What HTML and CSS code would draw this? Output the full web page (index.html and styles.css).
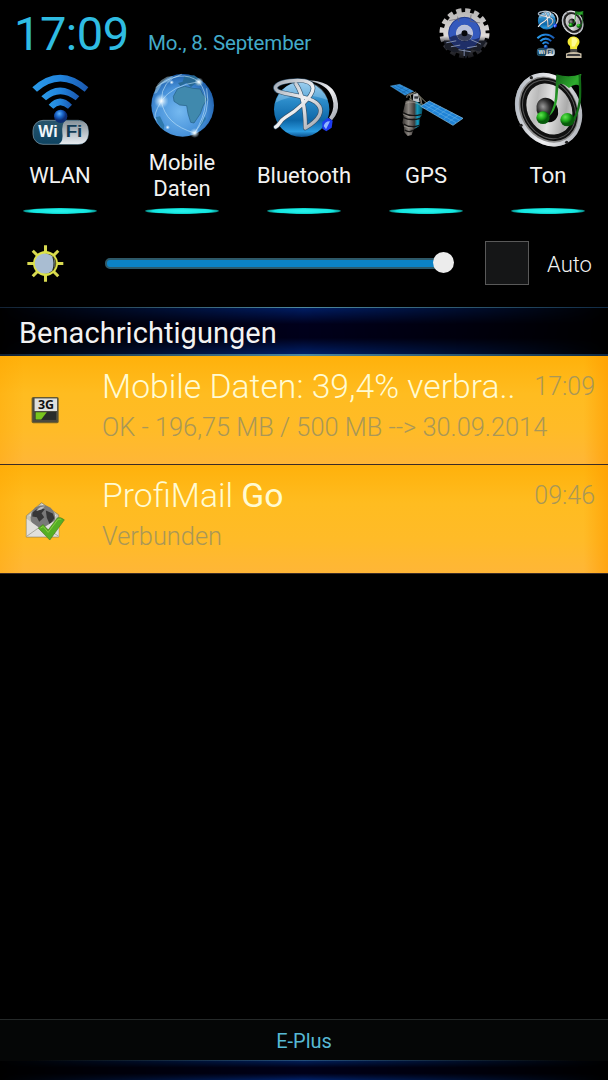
FILE: index.html
```html
<!DOCTYPE html>
<html lang="de">
<head>
    <meta charset="UTF-8">
    <meta name="viewport" content="width=device-width, initial-scale=1.0">
    <title>Benachrichtigungen</title>
    <link rel="stylesheet" href="styles.css">
</head>
<body>
    <!-- shared icons -->
    <svg class="defs" width="0" height="0">
        <defs>
            <linearGradient id="wave" x1="0" x2="1"><stop offset="0" stop-color="#2b9be8"/><stop offset=".5" stop-color="#2184dd"/><stop offset="1" stop-color="#1b57ae"/></linearGradient>
            <radialGradient id="dot" cx=".4" cy=".3"><stop offset="0" stop-color="#5fb2fa"/><stop offset=".5" stop-color="#1c68cd"/><stop offset="1" stop-color="#0b2c74"/></radialGradient>
            <linearGradient id="pill" x1="0" x2="0" y1="0" y2="1"><stop offset="0" stop-color="#28546b"/><stop offset="1" stop-color="#0e4361"/></linearGradient>
            <linearGradient id="silver" x1="0" x2="0" y1="0" y2="1"><stop offset="0" stop-color="#87939b"/><stop offset="1" stop-color="#e6ebf0"/></linearGradient>
            <radialGradient id="globe" cx=".45" cy=".6" r=".6"><stop offset="0" stop-color="#75b9f0"/><stop offset=".65" stop-color="#4791d9"/><stop offset="1" stop-color="#1d5da9"/></radialGradient>
            <radialGradient id="flare"><stop offset="0" stop-color="#fff"/><stop offset=".3" stop-color="#e6f6ff" stop-opacity=".75"/><stop offset="1" stop-color="#c0e4ff" stop-opacity="0"/></radialGradient>
            <linearGradient id="ball" x1="0" x2="0" y1="0" y2="1"><stop offset="0" stop-color="#8fc7ec"/><stop offset=".35" stop-color="#2b8bc9"/><stop offset=".7" stop-color="#0c67a8"/><stop offset=".9" stop-color="#2b9be0"/><stop offset="1" stop-color="#0a4b87"/></linearGradient>
            <linearGradient id="chrome" x1="0" x2="1" y1="0" y2="1"><stop offset="0" stop-color="#a3abb6"/><stop offset=".5" stop-color="#f0f0f2"/><stop offset="1" stop-color="#9da2ab"/></linearGradient>
            <linearGradient id="cone" x1="0" x2="1" y1="0" y2="1"><stop offset="0" stop-color="#efefef"/><stop offset=".3" stop-color="#b9b9b9"/><stop offset=".5" stop-color="#e3e3e3"/><stop offset=".75" stop-color="#aaa"/><stop offset="1" stop-color="#fafafa"/></linearGradient>
            <radialGradient id="cap" cx=".4" cy=".3"><stop offset="0" stop-color="#999"/><stop offset=".6" stop-color="#303030"/><stop offset="1" stop-color="#080808"/></radialGradient>
            <radialGradient id="note" cx=".35" cy=".3"><stop offset="0" stop-color="#63e552"/><stop offset=".6" stop-color="#1fab1b"/><stop offset="1" stop-color="#075b0b"/></radialGradient>
            <linearGradient id="beam" x1="0" x2="1" y1="0" y2="1"><stop offset="0" stop-color="#0a4b11"/><stop offset=".5" stop-color="#2eac2e"/><stop offset="1" stop-color="#08420c"/></linearGradient>
            <linearGradient id="body" x1="0" x2="1"><stop offset="0" stop-color="#36322f"/><stop offset=".3" stop-color="#8c8782"/><stop offset=".58" stop-color="#413d3b"/><stop offset=".72" stop-color="#119bc0"/><stop offset="1" stop-color="#064557"/></linearGradient>
            <linearGradient id="gear" gradientUnits="userSpaceOnUse" x1="0" x2="0" y1="24" y2="176"><stop offset="0" stop-color="#b5b3b3"/><stop offset=".55" stop-color="#e0dcda"/><stop offset=".68" stop-color="#4a4b52"/><stop offset="1" stop-color="#151519"/></linearGradient>
        </defs>

        <symbol id="i-wifi" viewBox="96 24 174 214">
            <path d="M97 64Q180-11 265 64L254 77Q180 16 111 77Z" fill="url(#wave)"/>
            <path d="M124 91Q180 38 238 91L227 103Q180 66 138 103Z" fill="url(#wave)"/>
            <path d="M146 116Q180 79 216 116L204 128Q180 107 160 128Z" fill="url(#wave)"/>
            <rect x="99" y="163" width="166" height="72" rx="30" fill="url(#pill)" stroke="#8ba6b5" stroke-width="2"/>
            <path d="M195 165H236Q265 163 265 198Q265 234 236 234H177Q191 224 187 200Q185 174 195 165Z" fill="url(#silver)"/>
            <circle cx="182" cy="151" r="20" fill="url(#dot)"/>
        </symbol>

        <symbol id="i-bluetooth" viewBox="84 34 202 184">
            <circle cx="170" cy="130" r="83" fill="url(#ball)"/>
            <path d="M91 110Q116 44 181 47Q235 53 249 103Q175 71 91 110Z" fill="#c4e6f8" opacity=".3"/>
            <path d="M188 43C244 45 274 65 279 113Q282 139 261 163L252 156Q267 134 265 111C260 75 240 55 188 43Z" fill="url(#chrome)"/>
            <path d="M92 183C103 178 104 164 121 154C151 137 207 91 204 65C201 44 172 41 134 45C96 50 82 64 98 75C119 86 178 87 212 109C244 134 218 165 181 186C181 144 178 91 153 54" fill="none" stroke="#35556f" stroke-width="14" stroke-linejoin="round" stroke-linecap="round"/>
            <path d="M92 183C103 178 104 164 121 154C151 137 207 91 204 65C201 44 172 41 134 45C96 50 82 64 98 75C119 86 178 87 212 109C244 134 218 165 181 186C181 144 178 91 153 54" fill="none" stroke="url(#chrome)" stroke-width="10" stroke-linejoin="round" stroke-linecap="round"/>
            <path d="M232 168L249 155L263 164L260 185L244 196L232 188Z" fill="#1d3bf1"/>
            <path d="M236 180Q240 165 255 166Q248 180 243 190Z" fill="#91b6ff"/>
        </symbol>

        <symbol id="i-sound" viewBox="74 16 208 230">
            <ellipse cx="177" cy="132" rx="94" ry="114" transform="rotate(-30 177 132)" fill="#8c8c8c"/>
            <ellipse cx="179" cy="131" rx="90" ry="109" transform="rotate(-30 179 131)" fill="none" stroke="url(#chrome)" stroke-width="11"/>
            <ellipse cx="180" cy="130" rx="81" ry="99" transform="rotate(-30 180 130)" fill="#101010"/>
            <ellipse cx="180" cy="130" rx="75" ry="92" transform="rotate(-30 180 130)" fill="none" stroke="#555" stroke-width="3"/>
            <ellipse cx="181" cy="129" rx="65" ry="80" transform="rotate(-30 181 129)" fill="url(#cone)"/>
            <ellipse cx="175" cy="132" rx="31" ry="38" transform="rotate(-30 175 132)" fill="url(#cap)"/>
            <g fill="#222"><circle cx="127" cy="35" r="5"/><circle cx="96" cy="178" r="5"/><circle cx="233" cy="229" r="5"/></g>
            <path d="M202 25Q240 37 277 24L272 61Q260 50 240 66Q219 48 209 55L205 100Q199 137 180 151Q196 121 198 93Z" fill="url(#beam)"/>
            <path d="M272 27C275 84 278 128 246 176" fill="none" stroke="#126c16" stroke-width="7"/>
            <ellipse cx="162" cy="155" rx="20" ry="19" fill="url(#note)"/>
            <ellipse cx="235" cy="161" rx="21" ry="20" fill="url(#note)"/>
        </symbol>
    </svg>

    <header class="status">
        <span class="clock">17:09</span>
        <span class="date">Mo., 8. September</span>
        <svg class="gear" viewBox="24 20 160 160">
            <circle cx="104" cy="99" r="68" fill="none" stroke="url(#gear)" stroke-width="15" stroke-dasharray="15.5 11.2"/>
            <circle cx="104" cy="99" r="64" fill="url(#gear)"/>
            <path d="M42 121H172L149 154L126 148L108 176L96 153L73 157L45 145Z" fill="#1a1d27"/>
            <circle cx="104" cy="99" r="37" fill="none" stroke="#3459bd" stroke-width="23"/>
            <circle cx="104" cy="99" r="48" fill="none" stroke="#1a2c70" stroke-width="2"/>
            <path d="M59 112Q82 99 102 112T149 113Q141 145 104 147Q66 143 59 112Z" fill="#18224c" opacity=".75"/>
            <path d="M49 128L79 122M124 119L154 132M63 140L91 135M112 143L142 138M103 148V168M86 149L123 155" fill="none" stroke="#7f8cab" stroke-width="3"/>
            <circle cx="104" cy="99" r="24" fill="#b8bfda"/>
            <path d="M81 106Q102 93 127 106Q121 123 103 123Q86 120 81 106Z" fill="#39405b"/>
            <circle cx="104" cy="99" r="9" fill="#050609"/>
            <path d="M83 49L87 64M58 61L89 55M124 43L121 63L151 68" stroke="#66616a" stroke-width="2" fill="none"/>
        </svg>
        <svg class="toggles" viewBox="315 20 150 160">
            <use href="#i-bluetooth" x="322" y="29" width="66" height="62"/>
            <use href="#i-sound" x="394" y="29" width="68" height="76"/>
            <use href="#i-wifi" x="319" y="99" width="57" height="70"/>
            <g transform="translate(287.6 91.1) scale(.3276)" class="wifi-text">
                <text x="115" y="214" textLength="58" lengthAdjust="spacingAndGlyphs" fill="#f1f6fa">Wi</text>
                <text x="197" y="214" textLength="50" lengthAdjust="spacingAndGlyphs" fill="#123c56">Fi</text>
            </g>
            <path d="M421 148L420 138Q410 130 414 119Q421 107 433 109Q449 112 449 126Q449 134 442 140L441 150Z" fill="#f5eb34"/>
            <path d="M425 113Q437 109 443 122L434 139H425Z" fill="#fffb93"/>
            <path d="M421 147H442V158H421Z" fill="#4d4c49"/>
            <path d="M408 160Q431 151 455 160V174H408Z" fill="#c9bda5"/>
            <path d="M413 162H449L452 168H410Z" fill="#3a3a3b"/>
        </svg>
    </header>

    <div class="quick">
        <div class="tile">
            <svg viewBox="-3 0 366 252">
                <use href="#i-wifi" x="96" y="24" width="174" height="214"/>
                <g class="wifi-text">
                    <text x="115" y="214" textLength="58" lengthAdjust="spacingAndGlyphs" fill="#f1f6fa">Wi</text>
                    <text x="197" y="214" textLength="50" lengthAdjust="spacingAndGlyphs" fill="#123c56">Fi</text>
                </g>
            </svg>
            <div class="label">WLAN</div>
            <div class="light"></div>
        </div>
        <div class="tile">
            <svg viewBox="-12 0 366 252">
                <circle cx="173" cy="118" r="94" fill="url(#globe)"/>
                <path d="M145 91L158 68L179 61L204 67L226 69L233 84L246 99L234 120L226 143L207 171L197 169L189 143L185 119L164 117L147 106Z" fill="#4089ad" stroke="#245d83" stroke-width="2"/>
                <path d="M159 51L173 47L178 31L207 28L225 40L231 52L219 59L210 53L198 63L184 51L166 60Z" fill="#286a95"/>
                <path d="M88 84Q91 48 126 32L144 30L133 46L111 54L96 80Z" fill="#a8d3eb" opacity=".5"/>
                <path d="M92 154L105 151L118 178L116 193Q99 177 92 154ZM226 171L240 151L243 159L226 184Z" fill="#2e79ad"/>
                <path d="M92 65Q168 5 222 48Q267 104 209 201Q121 176 109 105Q141 58 222 47M109 105Q80 153 94 163M109 105Q109 42 170 25M209 201Q260 139 245 67" fill="none" stroke="#c6e8fb" stroke-width="2.5" opacity=".7"/>
                <circle cx="109" cy="105" r="22" fill="url(#flare)"/>
                <circle cx="209" cy="201" r="15" fill="url(#flare)"/>
                <circle cx="222" cy="48" r="14" fill="url(#flare)"/>
                <circle cx="128" cy="184" r="7" fill="url(#flare)"/>
                <circle cx="140" cy="49" r="7" fill="url(#flare)"/>
            </svg>
            <div class="label">Mobile Daten</div>
            <div class="light"></div>
        </div>
        <div class="tile">
            <svg viewBox="-6 0 366 252"><use href="#i-bluetooth" x="84" y="34" width="202" height="184"/></svg>
            <div class="label">Bluetooth</div>
            <div class="light"></div>
        </div>
        <div class="tile">
            <svg viewBox="-6 0 366 252">
                <path d="M70 60L98 55L140 76L114 88Z" fill="#2c8ddb" stroke="#80bfe7" stroke-width="1"/>
                <path d="M79 62L119 83M87 58L130 80M94 73L111 61M106 80L126 69" stroke="#155994" stroke-width="1.5"/>
                <path d="M125 89L145 78L182 114M126 98L174 128M130 86L133 107M157 89L166 117" stroke="#8d8b75" stroke-width="3" fill="none"/>
                <path d="M139 83L153 82L158 108H137Z" fill="#bbbfc4"/><path d="M142 91H153V98H142Z" fill="#33373b"/>
                <path d="M119 95Q119 83 137 84M156 91Q166 101 161 115" fill="none" stroke="#737069" stroke-width="4"/>
                <path d="M116 105Q139 97 168 119L164 148L158 157L157 180L139 191L134 207L122 210L112 199L111 178L106 171L110 151L107 143Z" fill="url(#body)"/>
                <path d="M108 140Q130 155 164 145M108 154Q130 166 160 157M110 174Q130 188 157 178M113 192Q126 201 138 193" fill="none" stroke="#161514" stroke-width="4"/>
                <path d="M109 145Q127 156 143 153M110 180Q124 187 137 186M116 112Q138 102 162 119" fill="none" stroke="#aaa49d" stroke-width="2"/>
                <path d="M161 121L187 105L288 157L258 178Z" fill="#2083d6" stroke="#8fc8ea" stroke-width="2"/>
                <path d="M171 116L267 170M179 111L278 163M178 129L204 114M196 138L221 122M214 148L239 131M231 158L256 140M246 167L272 149" stroke="#6fb8e8" stroke-width="1.5"/>
            </svg>
            <div class="label">GPS</div>
            <div class="light"></div>
        </div>
        <div class="tile">
            <svg viewBox="-6 0 366 252"><use href="#i-sound" x="74" y="16" width="208" height="230"/></svg>
            <div class="label">Ton</div>
            <div class="light"></div>
        </div>
    </div>

    <div class="brightness">
        <svg class="sun" viewBox="80 56 116 116">
            <path d="M138 60V168M84 114H191M100 76L176 152M176 76L100 152" stroke="#d8d951" stroke-width="9"/>
            <circle cx="138" cy="114" r="37" fill="#dde34a"/>
            <circle cx="141" cy="114" r="29" fill="#5b5925"/>
            <circle cx="136" cy="114" r="30" fill="#a9bdd2"/>
            <path d="M160 95Q167 114 160 133" fill="none" stroke="#182017" stroke-width="3"/>
        </svg>
        <div class="slider"><div class="thumb"></div></div>
        <div class="checkbox"></div>
        <span class="auto">Auto</span>
    </div>

    <h1 class="section">Benachrichtigungen</h1>

    <div class="notification">
        <div class="icon">
            <svg viewBox="70 120 130 90">
                <rect x="96" y="126" width="82" height="79" rx="5" fill="#70612c"/>
                <rect x="99" y="128" width="76" height="73" rx="3" fill="#4b4a3f"/>
                <path d="M105 130H173V168H105Z" fill="#dedfdd"/>
                <path d="M106 171H170V195H106Z" fill="#292c2a"/>
                <path d="M108 172H142L125 194H108Z" fill="#79c51e"/>
                <text x="115" y="163" textLength="49" lengthAdjust="spacingAndGlyphs" class="network-text">3G</text>
            </svg>
        </div>
        <div class="content">
            <div class="row"><h2>Mobile Daten: 39,4% verbra..</h2><span class="time">17:09</span></div>
            <p class="info">OK - 196,75 MB / 500 MB --&gt; 30.09.2014</p>
        </div>
    </div>

    <div class="notification second">
        <div class="icon">
            <svg viewBox="70 430 130 125">
                <path d="M80 477L126 437L178 474V541H80Z" fill="#c5c4b9" stroke="#847a5a" stroke-width="2"/>
                <path d="M89 476L128 441L170 476L130 511Z" fill="#edece6"/>
                <circle cx="130" cy="482" r="37" fill="#797979"/>
                <path d="M99 467Q115 449 136 457L126 469L134 481L119 495L112 481L98 479ZM139 461L160 470L165 484L151 503L142 483Z" fill="#363636"/>
                <path d="M110 462Q120 448 136 449L126 458Z" fill="#bdbdbd"/>
                <path d="M81 486L119 513L135 511L178 484V539H81Z" fill="#e1e0dc"/>
                <path d="M82 538L119 512M138 513L177 538" stroke="#aaa99f" stroke-width="3"/>
                <path d="M116 514L131 503L146 520L174 483Q184 480 195 489L151 550Z" fill="#54af24" stroke="#4e7920" stroke-width="2"/>
                <path d="M123 514L131 509L146 527L176 487H186" fill="none" stroke="#8acd42" stroke-width="3"/>
            </svg>
        </div>
        <div class="content">
            <div class="row"><h2>ProfiMail <b>Go</b></h2><span class="time">09:46</span></div>
            <p class="info">Verbunden</p>
        </div>
    </div>

    <footer>
        <div class="carrier">E-Plus</div>
        <div class="handle"></div>
    </footer>
</body>
</html>
```
FILE: styles.css
```css
* { box-sizing: border-box; }
body { margin: 0; height: 1080px; display: flex; flex-direction: column; overflow: hidden; background-color: #000; color: #f2f2f2; font-family: Roboto, sans-serif; }
svg { display: block; flex: none; }
h1, h2, p { margin: 0; font-weight: 300; }
.defs { position: absolute; }

.status { height: 66px; display: flex; align-items: flex-start; padding-left: 14px; color: #2fbce2; white-space: nowrap; }
.clock { width: 134px; font-size: 47px; line-height: 68px; letter-spacing: -0.5px; }
.date { width: 290px; font-size: 20.5px; line-height: 87px; letter-spacing: -0.15px; color: #43abc9; }
.gear { width: 53px; height: 53px; margin-top: 7px; }
.toggles { width: 50px; height: 53px; margin: 7px 0 0 44px; }

.quick { display: grid; grid-template-columns: repeat(5, 122px); margin-left: -1px; height: 160px; }
.tile { display: flex; flex-direction: column; align-items: center; }
.tile svg { width: 122px; height: 84px; }
.label { height: 52px; width: 104px; display: flex; align-items: center; justify-content: center; text-align: center; font-size: 22px; line-height: 26px; }
.light { width: 74px; height: 6px; margin-top: 6px; border-radius: 50%; background: radial-gradient(closest-side, #2bf5ee 0%, #12e6e0 80%, #08837f 100%); }
.wifi-text { font: bold 50px "Liberation Sans", sans-serif; }

.brightness { height: 81px; display: flex; align-items: center; padding: 0 15px 6px 26px; }
.sun { width: 39px; height: 39px; }
.slider { position: relative; width: 340px; height: 11px; margin-left: 40px; border: 2px solid #2d5969; border-radius: 5px; background-color: #0b82c5; }
.thumb { position: absolute; right: -11px; top: -8px; width: 21px; height: 21px; border-radius: 50%; background-color: #ececec; }
.checkbox { width: 44px; height: 44px; margin: -2px 0 0 40px; border: 1px solid #595959; background-color: #151617; }
.auto { margin: 2px 0 0 18px; font-size: 22px; font-weight: 300; }

.section { height: 49px; padding-left: 19px; font-size: 29px; line-height: 50px; font-weight: 400; letter-spacing: 0.05px; border-top: 1px solid; border-bottom: 2px solid; border-image: linear-gradient(90deg, #122235, #4d899f 50%, #102a44) 1;
    background: linear-gradient(90deg, #000 0%, transparent 50%, #000 100%), linear-gradient(#001d64, #00001c 35%, #00001a 65%, #002069); }

.notification { height: 109px; display: flex; padding: 0 13px 0 23px; border-bottom: 1px solid #3b2b25; background: linear-gradient(90deg, rgba(255,165,0,.35), transparent 4%, transparent 96%, rgba(255,156,0,.65)), linear-gradient(#ffb10b, #ffbc20 35%, #ffbb28 70%, #ffb637); }
.icon { width: 79px; padding-top: 39px; }
.icon svg { width: 43px; height: 30px; }
.second .icon { padding-top: 35px; }
.second .icon svg { height: 42px; }
.content { flex: 1; white-space: nowrap; }
.row { display: flex; justify-content: space-between; padding-top: 9px; }
h2 { font-size: 33.7px; line-height: 44px; color: #fffbd2; }
h2 b { font-weight: 400; }
.time { font-size: 25px; line-height: 43px; font-weight: 300; color: #a99758; }
.info { font-size: 25.4px; line-height: 30px; margin-top: 3px; color: #a99758; }
.network-text { font: bold 36px "Open Sans", sans-serif; fill: #111; }

footer { margin-top: auto; height: 61px; border-top: 1px solid #252929; background-color: #050606; }
.carrier { height: 40px; line-height: 43px; text-align: center; font-size: 20px; color: #57b9d5; }
.handle { height: 20px; border-top: 1px solid; border-image: linear-gradient(90deg, #050606 5%, #244d78 50%, #050606 95%) 1;
    background: linear-gradient(90deg, #000, transparent 50%, #000), linear-gradient(#001e58, #000018 35%, #000018 65%, #002168); }
```
